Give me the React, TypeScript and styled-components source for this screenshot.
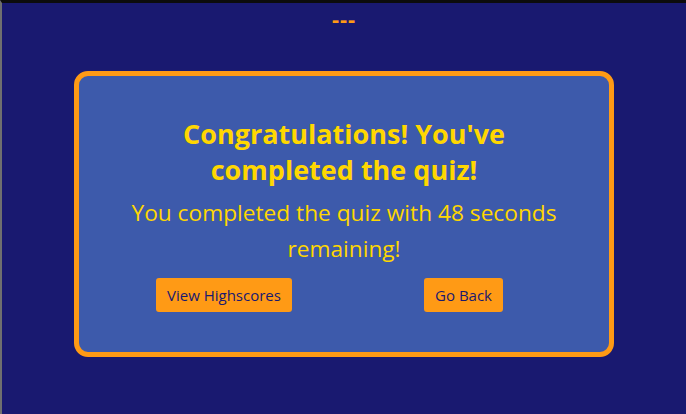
import React from "react";
import styled, { createGlobalStyle } from "styled-components";

const Global = createGlobalStyle`
  html, body { margin: 0; padding: 0; }
  body {
    background: #191970;
    font-family: "Open Sans", "Noto Sans", sans-serif;
    height: 414px;
    box-sizing: border-box;
    border-top: 3px solid #0c0c0c;
    border-left: 2px solid #6f6f6f;
    overflow: hidden;
  }
`;

const Page = styled.main`
  display: flex;
  flex-direction: column;
  align-items: center;
`;

const Timer = styled.div`
  color: #ff9a15;
  font-size: 22px;
  line-height: 26px;
  height: 26px;
  margin-top: 2px;
  font-weight: 700;
  letter-spacing: 1px;
`;

const Card = styled.section`
  margin-top: 40px;
  width: 540px;
  box-sizing: border-box;
  background: #3d5aab;
  border: 5px solid #ff9a15;
  border-radius: 14px;
  padding: 40px 0 40px;
  display: flex;
  flex-direction: column;
  align-items: center;
`;

const Title = styled.h1`
  margin: 0;
  max-width: 400px;
  text-align: center;
  color: #ffd700;
  font-size: 27px;
  line-height: 35.5px;
  font-weight: 700;
`;

const Message = styled.p`
  margin: 8px 0 0;
  max-width: 450px;
  text-align: center;
  color: #ffd700;
  font-size: 22.7px;
  line-height: 35.5px;
`;

const Actions = styled.div`
  align-self: stretch;
  display: flex;
  justify-content: space-between;
  padding: 0 106px 0 77px;
  margin-top: 12px;
`;

const Button = styled.button`
  background: #ff9a15;
  color: #191970;
  border: none;
  border-radius: 3px;
  height: 34px;
  padding: 0 11px;
  font-family: inherit;
  font-size: 15px;
  cursor: pointer;
`;

export default function App() {
  return (
    <>
      <Global />
      <Page>
        <Timer>---</Timer>
        <Card>
          <Title>Congratulations! You've completed the quiz!</Title>
          <Message>You completed the quiz with 48 seconds remaining!</Message>
          <Actions>
            <Button>View Highscores</Button>
            <Button>Go Back</Button>
          </Actions>
        </Card>
      </Page>
    </>
  );
}
